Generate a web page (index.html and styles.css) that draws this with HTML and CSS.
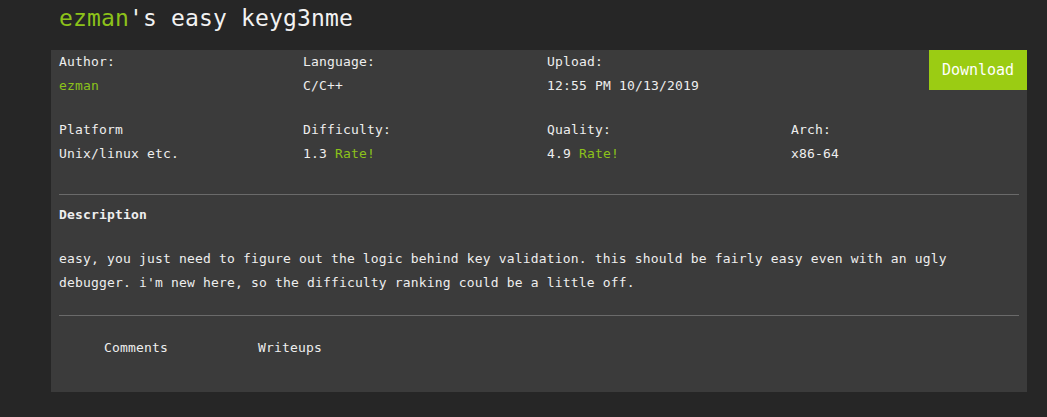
FILE: index.html
```html
<!DOCTYPE html>
<html>
<head>
<meta charset="utf-8">
<link rel="stylesheet" href="styles.css">
</head>
<body>
<h1 class="title"><span class="green">ezman</span>'s easy keyg3nme</h1>
<div class="panel">
  <a class="download">Download</a>
  <div class="meta">
    <div class="cell"><div>Author:</div><div class="green">ezman</div></div>
    <div class="cell"><div>Language:</div><div>C/C++</div></div>
    <div class="cell"><div>Upload:</div><div>12:55 PM 10/13/2019</div></div>
    <div class="cell"></div>
    <div class="cell"><div>Platform</div><div>Unix/linux etc.</div></div>
    <div class="cell"><div>Difficulty:</div><div>1.3 <span class="green">Rate!</span></div></div>
    <div class="cell"><div>Quality:</div><div>4.9 <span class="green">Rate!</span></div></div>
    <div class="cell"><div>Arch:</div><div>x86-64</div></div>
  </div>
  <hr class="rule rule-top">
  <div class="desc-title">Description</div>
  <p class="desc">easy, you just need to figure out the logic behind key validation. this should be fairly easy even with an ugly debugger. i'm new here, so the difficulty ranking could be a little off.</p>
  <hr class="rule rule-bottom">
  <div class="tabs">
    <span class="tab">Comments</span>
    <span class="tab">Writeups</span>
  </div>
</div>
</body>
</html>
```
FILE: styles.css
```css
html, body {
  margin: 0;
  padding: 0;
  background: #262626;
  color: #eeeeee;
  font-family: "DejaVu Sans Mono", monospace;
  font-size: 13px;
  letter-spacing: 0.17px;
}
.green { color: #8cc21a; }
.title {
  margin: 0;
  padding: 2px 0 0 59px;
  height: 50px;
  box-sizing: border-box;
  font-weight: normal;
  font-size: 23px;
  letter-spacing: 0.15px;
  line-height: 32px;
  color: #f2f2f2;
}
.panel {
  position: relative;
  margin-left: 51px;
  width: 976px;
  height: 342px;
  background: #3b3b3b;
  padding: 0 8px;
  box-sizing: border-box;
  line-height: 24px;
}
.download {
  position: absolute;
  right: 0;
  top: 0;
  width: 98px;
  height: 40px;
  background: #9bcc13;
  color: #ffffff;
  font-size: 15px;
  letter-spacing: 0;
  display: flex;
  align-items: center;
  justify-content: center;
}
.meta {
  display: grid;
  grid-template-columns: repeat(4, 244px);
  row-gap: 20px;
}
.rule {
  border: 0;
  height: 1px;
  background: #6a6a6a;
  margin: 0;
  width: 960px;
}
.rule-top { margin-top: 28px; }
.desc-title {
  margin-top: 8px;
  font-weight: bold;
}
.desc {
  margin: 20px 0 20px 0;
  width: 960px;
}
.tabs {
  margin-top: 20px;
  display: flex;
  padding-left: 45px;
  gap: 90px;
}
```
